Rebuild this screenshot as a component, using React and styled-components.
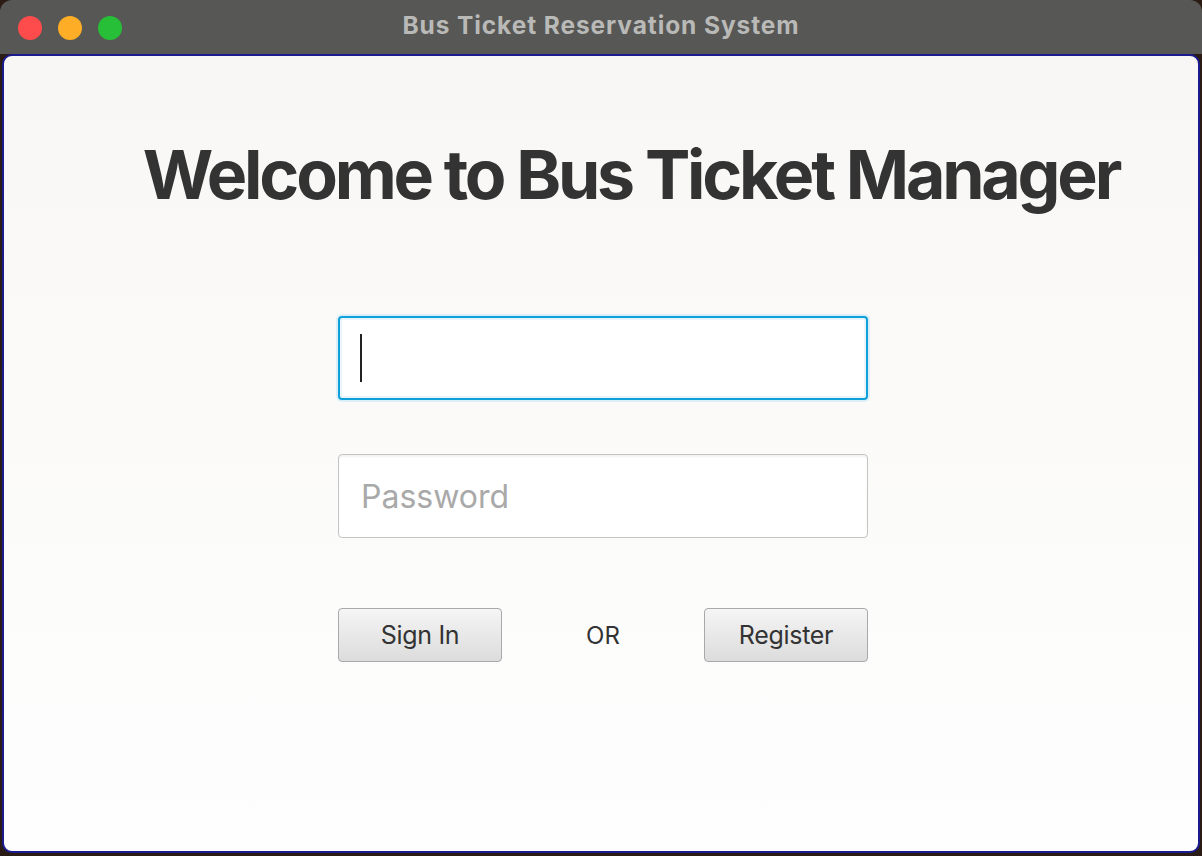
import styled, { createGlobalStyle } from "styled-components";

const Global = createGlobalStyle`
  html, body {
    margin: 0;
    padding: 0;
    background: #2a1c14;
  }
  body {
    font-family: Inter, "Liberation Sans", sans-serif;
  }
`;

const Window = styled.div`
  width: 1202px;
  height: 856px;
  display: flex;
  flex-direction: column;
  background: #2a1c14;
`;

const TitleBar = styled.div`
  height: 54px;
  flex: none;
  background: #575755;
  border-radius: 12px 12px 0 0;
  display: flex;
  align-items: center;
  padding: 0 18px;
`;

const Lights = styled.div`
  display: flex;
  gap: 16px;
  margin-top: 1px;
`;

const Light = styled.span`
  width: 24px;
  height: 24px;
  border-radius: 50%;
  background: ${(p) => p.color};
`;

const WindowTitle = styled.div`
  flex: 1;
  text-align: center;
  margin-right: 104px;
  margin-top: -4px;
  font-size: 24.5px;
  font-weight: 700;
  color: #b9b9b7;
  letter-spacing: 0.9px;
`;

const Content = styled.main`
  height: 799px;
  margin: 0 2px;
  box-sizing: border-box;
  border: 2px solid #1b1a8e;
  border-radius: 10px;
  background: linear-gradient(to bottom, #f8f7f5, #fefefe);
  display: flex;
  flex-direction: column;
  align-items: center;
`;

const Heading = styled.h1`
  margin: 76px 0 0 60px;
  font-size: 68px;
  line-height: 84px;
  font-weight: 700;
  letter-spacing: -3.2px;
  color: #333333;
`;

const Form = styled.form`
  width: 530px;
  margin: 100px 0 0 4px;
  display: flex;
  flex-direction: column;
`;

const Field = styled.label`
  height: 84px;
  box-sizing: border-box;
  display: flex;
  align-items: center;
  padding: ${(p) => (p.focused ? "0 20px" : "0 22px")};
  background: #ffffff;
  border-radius: 4px;
  border: ${(p) => (p.focused ? "2px solid #0ea0d9" : "1px solid #c4c4c4")};
  box-shadow: ${(p) =>
    p.focused
      ? "0 0 0 2px #dceff8, inset 0 0 0 2px #eaf5fb"
      : "inset 0 2px 2px rgba(0,0,0,0.05)"};
  & + & {
    margin-top: 54px;
  }
`;

const Caret = styled.span`
  width: 2px;
  height: 48px;
  background: #222;
  flex: none;
`;

const Input = styled.input`
  flex: 1;
  min-width: 0;
  border: none;
  outline: none;
  background: transparent;
  font-family: Inter, "Liberation Sans", sans-serif;
  font-size: 32px;
  color: #333;
  caret-color: transparent;
  padding: 0;
  &::placeholder {
    color: #a9a9a9;
  }
`;

const Actions = styled.div`
  margin-top: 70px;
  display: flex;
  align-items: center;
  justify-content: space-between;
`;

const Button = styled.button`
  width: 164px;
  height: 54px;
  border: 1px solid #a9a9a9;
  border-radius: 4px;
  background: linear-gradient(to bottom, #f5f5f5, #dcdcdc);
  font-family: Inter, "Liberation Sans", sans-serif;
  font-size: 25px;
  color: #333;
  padding: 0;
  letter-spacing: -0.3px;
`;

const Or = styled.span`
  font-size: 24px;
  color: #333;
`;

export default function App() {
  return (
    <Window>
      <Global />
      <TitleBar>
        <Lights>
          <Light color="#fe4b4b" />
          <Light color="#fdae26" />
          <Light color="#27bf38" />
        </Lights>
        <WindowTitle>Bus Ticket Reservation System</WindowTitle>
      </TitleBar>
      <Content>
        <Heading>Welcome to Bus Ticket Manager</Heading>
        <Form onSubmit={(e) => e.preventDefault()}>
          <Field focused>
            <Caret />
            <Input type="text" />
          </Field>
          <Field>
            <Input type="password" placeholder="Password" />
          </Field>
          <Actions>
            <Button type="submit">Sign In</Button>
            <Or>OR</Or>
            <Button type="button">Register</Button>
          </Actions>
        </Form>
      </Content>
    </Window>
  );
}
